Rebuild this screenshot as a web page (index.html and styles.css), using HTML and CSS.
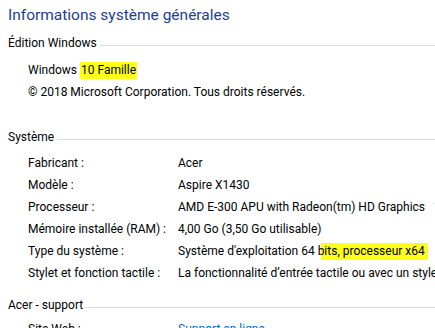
FILE: index.html
```
<!DOCTYPE html>
<html lang="fr">
<head>
<meta charset="utf-8">
<link rel="stylesheet" href="styles.css">
</head>
<body>
<div class="page">
  <h1 class="title">Informations système générales</h1>

  <div class="section-head sh-edition"><span class="sh-text">Édition Windows</span><span class="sh-line"></span></div>
  <div class="plain">
    <div class="line">Windows <mark class="hl">10 Famille</mark></div>
    <div class="line">© 2018 Microsoft Corporation. Tous droits réservés.</div>
  </div>

  <div class="section-head sh-system"><span class="sh-text">Système</span><span class="sh-line"></span></div>
  <div class="rows">
    <div class="label">Fabricant :</div><div class="value">Acer</div>
    <div class="label">Modèle :</div><div class="value">Aspire X1430</div>
    <div class="label">Processeur :</div><div class="value">AMD E-300 APU with Radeon(tm) HD Graphics &nbsp;&nbsp;1,30 GHz</div>
    <div class="label">Mémoire installée (RAM) :</div><div class="value">4,00 Go (3,50 Go utilisable)</div>
    <div class="label">Type du système :</div><div class="value">Système d'exploitation 64 <mark class="hl2">bits, processeur x64</mark></div>
    <div class="label">Stylet et fonction tactile :</div><div class="value">La fonctionnalité d’entrée tactile ou avec un stylet n’est pas disponible sur cet écran</div>
  </div>

  <div class="section-head sh-support"><span class="sh-text">Acer - support</span><span class="sh-line"></span></div>
  <div class="rows rows-support">
    <div class="label">Site Web :</div><div class="value link">Support en ligne</div>
  </div>
</div>
</body>
</html>
```
FILE: styles.css
```
html, body {
  margin: 0;
  padding: 0;
  background: #ffffff;
  overflow: hidden;
}
body {
  width: 435px;
  height: 328px;
  font-family: Roboto, "Noto Sans", sans-serif;
  font-size: 12px;
  color: #000000;
}
.page {
  padding: 4px 0 0 8px;
  white-space: nowrap;
}
.title {
  margin: 0;
  font-weight: 400;
  font-size: 15.5px;
  line-height: 22px;
  color: #1e3f8f;
}
.section-head {
  display: flex;
  align-items: center;
  line-height: 22px;
}
.sh-edition { margin-top: 6px; }
.sh-system { margin-top: 23px; }
.sh-support { margin-top: 10px; }
.sh-text {
  flex: none;
}
.sh-line {
  flex: 1;
  height: 1px;
  margin-left: 3px;
  margin-top: 4px;
  background: #dcdcdc;
}
.plain {
  margin-top: 5px;
  padding-left: 20px;
}
.line {
  line-height: 22px;
}
.rows {
  margin-top: 4px;
  padding-left: 20px;
  display: grid;
  grid-template-columns: 150px auto;
  grid-auto-rows: 22px;
  align-items: center;
}
.rows-support { margin-top: 2px; }
.hl {
  background: #ffff1a;
  color: inherit;
  padding: 1px 1px 2px 1px;
}
.hl2 {
  background: linear-gradient(to right, transparent 3px, #ffff1a 3px);
  color: inherit;
  padding: 1px 3px 2px 0;
}
.link {
  color: #0066cc;
}
```
